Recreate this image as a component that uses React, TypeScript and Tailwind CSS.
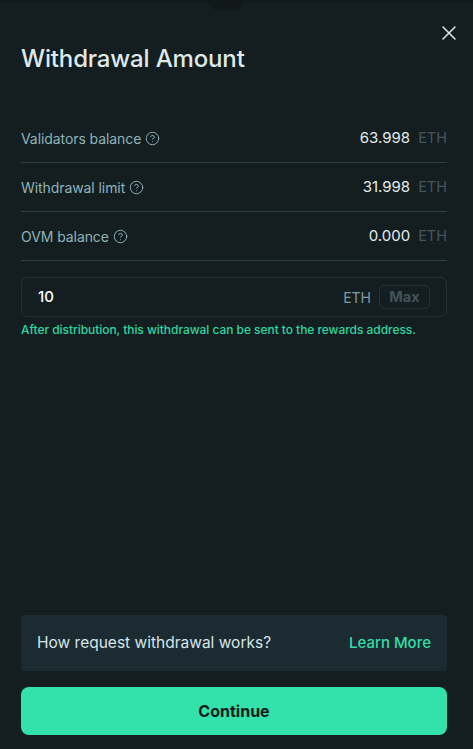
import { X, CircleHelp } from 'lucide-react';

const rows = [
  { label: 'Validators balance', value: '63.998' },
  { label: 'Withdrawal limit', value: '31.998' },
  { label: 'OVM balance', value: '0.000' },
];

export default function App() {
  return (
    <div className="relative h-[749px] w-[473px] overflow-hidden bg-[#10181a] pt-[2px] font-['Inter',sans-serif]">
      <div className="relative flex h-[747px] flex-col bg-[#141e20] pl-[21px] pr-[26px]">
        {/* notch at the top of the sheet */}
        <svg className="absolute left-[205px] top-[-2px]" width="44" height="11" viewBox="0 0 44 11">
          <path d="M0 0H44V2H42Q38 2 37 6Q36 10 33 10H11Q8 10 7 6Q6 2 2 2H0Z" fill="#10181a" />
        </svg>
        <button className="absolute right-[12px] top-[19px] text-[#dfe9ea]">
          <X size={24} strokeWidth={1.5} />
        </button>

        <h1 className="mt-[41px] h-[32px] text-[24px] font-medium leading-[32px] tracking-[-0.15px] text-[#dfe9ea]">
          Withdrawal Amount
        </h1>

        <div className="mt-[39px]">
          {rows.map((row) => (
            <div key={row.label} className="flex h-[49px] items-center justify-between border-b border-[#2a3f47]">
              <div className="flex items-center gap-[4px] text-[14px] tracking-[-0.08px] text-[#8fb3b8]">
                <span>{row.label}</span>
                <CircleHelp size={15} strokeWidth={1.5} />
              </div>
              <div className="flex items-center gap-[8px]">
                <span className="text-[15px] text-[#e4ecec]">{row.value}</span>
                <span className="text-[14.5px] text-[#44565c]">ETH</span>
              </div>
            </div>
          ))}
        </div>

        <div className="mt-[16px] flex h-[40px] items-center justify-between rounded-md border border-[#233237] pl-[16px] pr-[16px]">
          <span className="text-[15px] font-medium text-white">10</span>
          <div className="flex items-center gap-[8px]">
            <span className="text-[14px] text-[#7d9aa0]">ETH</span>
            <span className="flex h-[24px] w-[51px] items-center justify-center rounded-[5px] border border-[#233237] text-[14.5px] font-bold text-[#41535a]">
              Max
            </span>
          </div>
        </div>
        <p className="mt-[6px] text-[12px] font-medium leading-[14px] tracking-[-0.05px] text-[#2fd6a0]">
          After distribution, this withdrawal can be sent to the rewards address.
        </p>

        <div className="mt-auto flex h-[56px] items-center justify-between rounded bg-[#1c2a31] px-[16px]">
          <span className="text-[15.5px] text-[#d5e6ea]">How request withdrawal works?</span>
          <a className="text-[15px] font-medium text-[#33dfa8]">Learn More</a>
        </div>
        <button className="mb-[14px] mt-[16px] h-[48px] rounded-lg bg-[#33e2aa] text-[16px] font-bold text-[#10191b]">
          Continue
        </button>
      </div>
    </div>
  );
}
